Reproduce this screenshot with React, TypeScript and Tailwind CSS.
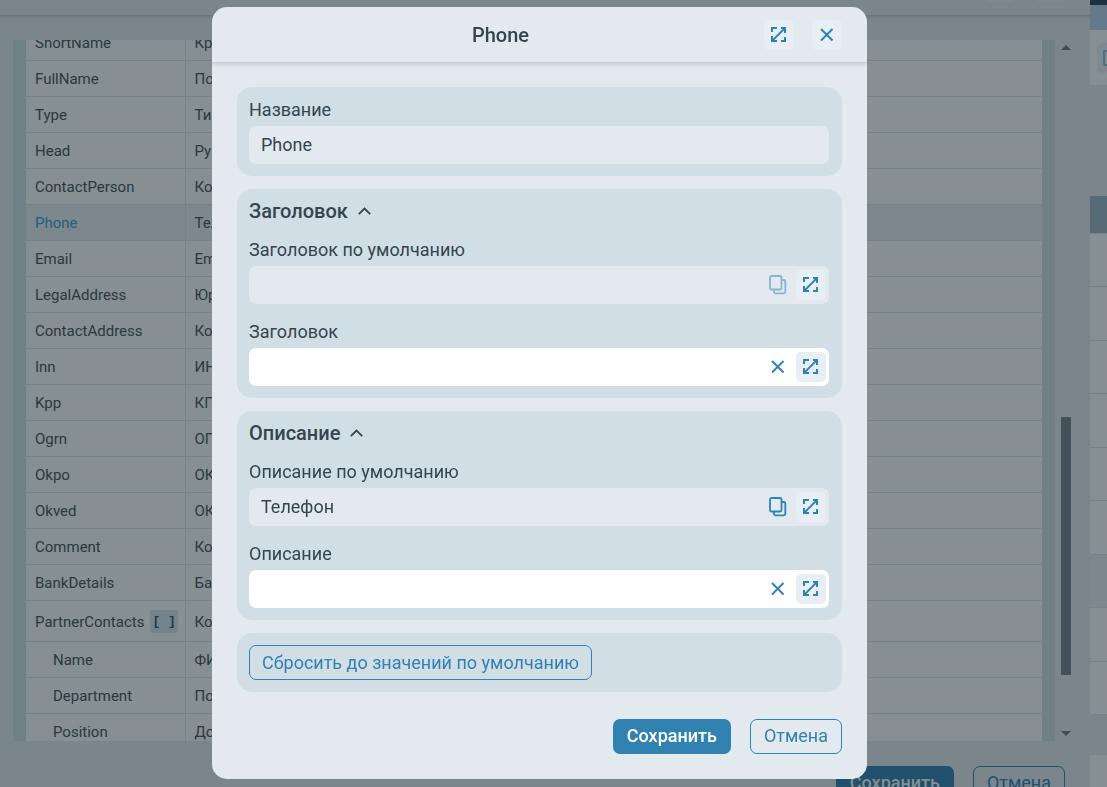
import { useState } from 'react';

type Row = { name: string; title: string; nested?: boolean; list?: boolean };

const ROWS: Row[] = [
  { name: 'ShortName', title: 'Крат.' },
  { name: 'FullName', title: 'Полн.' },
  { name: 'Type', title: 'Тип' },
  { name: 'Head', title: 'Рук.' },
  { name: 'ContactPerson', title: 'Конт.' },
  { name: 'Phone', title: 'Тел.' },
  { name: 'Email', title: 'Email' },
  { name: 'LegalAddress', title: 'Юр.' },
  { name: 'ContactAddress', title: 'Конт.' },
  { name: 'Inn', title: 'ИНН' },
  { name: 'Kpp', title: 'КПП' },
  { name: 'Ogrn', title: 'ОГРН' },
  { name: 'Okpo', title: 'ОКПО' },
  { name: 'Okved', title: 'ОКВЭД' },
  { name: 'Comment', title: 'Ком.' },
  { name: 'BankDetails', title: 'Банк' },
  { name: 'PartnerContacts', title: 'Конт.', list: true },
  { name: 'Name', title: 'ФИО', nested: true },
  { name: 'Department', title: 'Подр.', nested: true },
  { name: 'Position', title: 'Долж.', nested: true },
];

const SIDE_ROWS = [0, 1, 2, 3, 4, 5, 6, 7, 8];

function ExpandIcon() {
  return (
    <svg width="16" height="16" viewBox="0 0 16 16" fill="none" stroke="currentColor" strokeWidth="2">
      <path d="M1 5V1h5M10 1h4v5M1 9v5h5M14 10v4h-4" />
      <path d="M2 13L13 2" strokeWidth="1.8" />
      <path d="M11 1h3v3zM1 11v3h3z" fill="currentColor" stroke="none" />
    </svg>
  );
}

function CloseIcon() {
  return (
    <svg width="14" height="14" viewBox="0 0 14 14" fill="none" stroke="currentColor" strokeWidth="2">
      <path d="M1 1l11.5 11.5M12.5 1L1 12.5" />
    </svg>
  );
}

function CopyIcon() {
  return (
    <svg width="18" height="20" viewBox="0 0 18 20" fill="none" stroke="currentColor" strokeWidth="1.8">
      <rect x="1" y="1" width="11.5" height="13.5" rx="1.5" />
      <path d="M12.5 5h2.3a1.5 1.5 0 0 1 1.5 1.5v10.3a1.5 1.5 0 0 1-1.5 1.5H6.5A1.5 1.5 0 0 1 5 16.800v-2.300" />
    </svg>
  );
}

function ChevronUp() {
  return (
    <svg width="13" height="8" viewBox="0 0 13 8" fill="none" stroke="currentColor" strokeWidth="1.8">
      <path d="M.8 7.2l5.700-5.700 5.700 5.700" />
    </svg>
  );
}

type IconButtonProps = { label: string; plain?: boolean; disabled?: boolean; children: React.ReactNode };

function IconButton({ label, plain, disabled, children }: IconButtonProps) {
  return (
    <button
      type="button"
      aria-label={label}
      disabled={disabled}
      className={`flex size-[30px] shrink-0 items-center justify-center rounded-[5px] text-[#3182b1] disabled:opacity-50 ${plain ? '' : 'bg-[#e7eff5]'}`}
    >
      {children}
    </button>
  );
}

type FieldProps = {
  id: string;
  label: string;
  value: string;
  readOnly?: boolean;
  onChange?: (v: string) => void;
  children?: React.ReactNode;
};

function Field({ id, label, value, readOnly, onChange, children }: FieldProps) {
  return (
    <div className="flex flex-col gap-[5px]">
      <label htmlFor={id} className="text-lg leading-[22px]">{label}</label>
      <div className={`flex h-[38px] items-center gap-[3px] rounded-[7px] pr-[3px] ${readOnly ? 'bg-[#e2eaf0]' : 'bg-white'}`}>
        <input
          id={id}
          value={value}
          readOnly={readOnly}
          onChange={(e) => onChange?.(e.target.value)}
          className="h-full min-w-0 flex-1 bg-transparent px-3 pb-0.5 text-lg outline-none"
        />
        {children}
      </div>
    </div>
  );
}

function Group({ title, children }: { title: string; children: React.ReactNode }) {
  return (
    <section className="rounded-[15px] bg-[#d1dee6] p-3 pr-[13px]">
      <h3 className="mb-[18px] text-xl leading-5 font-medium">
        <button type="button" className="flex items-center gap-2.5">
          {title}
          <ChevronUp />
        </button>
      </h3>
      <div className="flex flex-col gap-[17px]">{children}</div>
    </section>
  );
}

function PropertyTable() {
  return (
    <table className="-mt-4 w-full table-fixed border-collapse text-[15px]">
      <colgroup>
        <col className="w-[159px]" />
        <col />
      </colgroup>
      <tbody>
        {ROWS.map((row) => (
          <tr
            key={row.name}
            className={`border-b border-[#74828a] ${row.list ? 'h-[41px]' : 'h-9'} ${row.name === 'Phone' ? 'bg-[#7c888e]' : 'bg-[#868f91]'}`}
          >
            <td className={`border-r border-[#74828a] pt-0.5 ${row.nested ? 'pl-[27px]' : 'pl-[9px]'} ${row.name === 'Phone' ? 'text-[#245f80]' : ''}`}>
              <div className="flex items-center gap-1.5 leading-5">
                {row.name}
                {row.list && (
                  <span className="rounded-[3px] bg-[#74848c] px-0.5 font-mono text-[13px] leading-[23px] font-bold whitespace-pre">[ ]</span>
                )}
              </div>
            </td>
            <td className="pt-0.5 pl-[9px] leading-5">{row.title}</td>
          </tr>
        ))}
      </tbody>
    </table>
  );
}

function Background() {
  return (
    <div className="flex h-screen overflow-hidden bg-[#7b868c] text-[#2a3941]">
      <div className="flex min-w-0 flex-1 flex-col">
        <header className="flex h-[15px] shrink-0 justify-end gap-[21px] pr-[27px] shadow-[0_1px_3px_1px_#6b757c]">
          <span className="h-0.5 w-7 rounded-b bg-[#7e898f]" />
          <span className="h-0.5 w-7 rounded-b bg-[#7e898f]" />
        </header>
        <div className="mt-[25px] flex min-h-0 flex-1 pl-[13px] pr-[19px]">
          <div className="min-w-0 flex-1 overflow-hidden bg-[#6f8087] px-[13px]">
            <PropertyTable />
          </div>
          <div className="ml-1.5 flex w-2.5 flex-col pt-[5px] pb-[5px]">
            <svg width="10" height="5" viewBox="0 0 10 5" fill="#404d55"><path d="M0 5l5-5 5 5z" /></svg>
            <div className="flex flex-1 flex-col py-1">
              <div className="grow-[363]" />
              <div className="grow-[258] bg-[#435059]" />
              <div className="grow-[52]" />
            </div>
            <svg width="10" height="5" viewBox="0 0 10 5" fill="#404d55"><path d="M0 0l5 5 5-5z" /></svg>
          </div>
        </div>
        <footer className="flex h-[46px] shrink-0 justify-end gap-[19px] pt-[25px] pr-[25px] text-lg">
          <button type="button" className="h-[35px] rounded-[7px] bg-[#20506c] px-3.5 pb-0.5 font-medium text-[#868f91]">Сохранить</button>
          <button type="button" className="h-[35px] rounded-[7px] border border-[#20506c] px-[13px] pb-0.5 text-[#20506c]">Отмена</button>
        </footer>
      </div>

      <aside className="flex w-[17px] shrink-0 flex-col overflow-hidden">
        <div className="h-[5px] shrink-0 bg-[#1e3044]" />
        <div className="h-[25px] shrink-0 bg-[#65798a]" />
        <div className="flex h-[55px] shrink-0 items-center bg-[#868f91] pl-[7px]">
          <div className="flex size-[30px] shrink-0 items-center rounded-[5px] bg-[#7f8992] pl-1.5">
            <div className="h-4 w-4 shrink-0 rounded-xs border-2 border-[#4e7080]" />
          </div>
        </div>
        <div className="h-[111px] shrink-0" />
        <div className="h-[38px] shrink-0 border-b border-[#74828a] bg-[#566b76]" />
        <div className="flex h-[481px] shrink-0 flex-col">
          {SIDE_ROWS.map((i) => (
            <div key={i} className={`flex-1 border-b border-[#74828a] ${i === 6 ? 'bg-[#7c888e]' : 'bg-[#868f91]'}`} />
          ))}
        </div>
        <div className="h-10 shrink-0" />
        <div className="flex-1 bg-[#868f91]" />
      </aside>
    </div>
  );
}

export default function App() {
  const [title, setTitle] = useState('');
  const [description, setDescription] = useState('');

  return (
    <div className="font-[Roboto,sans-serif]">
      <Background />

      <div className="fixed inset-0 flex items-start justify-center pt-[7px] pr-7">
        <div role="dialog" aria-labelledby="dialog-title" className="w-full max-w-[655px] overflow-hidden rounded-[15px] bg-[#e2eaf0] text-[#35454e]">
          <header className="flex h-[55px] items-center px-[25px] shadow-[0_1px_4px_1px_#bcc6d0]">
            <h2 id="dialog-title" className="flex-1 text-center text-xl font-medium">Phone</h2>
            <div className="flex gap-[18px]">
              <IconButton label="Развернуть"><ExpandIcon /></IconButton>
              <IconButton label="Закрыть"><CloseIcon /></IconButton>
            </div>
          </header>

          <form className="p-[25px]" onSubmit={(e) => e.preventDefault()}>
            <div className="flex flex-col gap-[13px]">
              <section className="rounded-[15px] bg-[#d1dee6] p-3 pr-[13px]">
                <Field id="name" label="Название" value="Phone" readOnly />
              </section>

              <Group title="Заголовок">
                <Field id="title-default" label="Заголовок по умолчанию" value="" readOnly>
                  <IconButton label="Копировать" plain disabled><CopyIcon /></IconButton>
                  <IconButton label="Развернуть"><ExpandIcon /></IconButton>
                </Field>
                <Field id="title" label="Заголовок" value={title} onChange={setTitle}>
                  <IconButton label="Очистить" plain><CloseIcon /></IconButton>
                  <IconButton label="Развернуть"><ExpandIcon /></IconButton>
                </Field>
              </Group>

              <Group title="Описание">
                <Field id="description-default" label="Описание по умолчанию" value="Телефон" readOnly>
                  <IconButton label="Копировать" plain><CopyIcon /></IconButton>
                  <IconButton label="Развернуть"><ExpandIcon /></IconButton>
                </Field>
                <Field id="description" label="Описание" value={description} onChange={setDescription}>
                  <IconButton label="Очистить" plain><CloseIcon /></IconButton>
                  <IconButton label="Развернуть"><ExpandIcon /></IconButton>
                </Field>
              </Group>

              <section className="flex rounded-[15px] bg-[#d1dee6] p-3">
                <button type="reset" className="h-[35px] rounded-[7px] border border-[#3182b1] px-3 text-lg text-[#3182b1]">
                  Сбросить до значений по умолчанию
                </button>
              </section>
            </div>

            <div className="mt-[27px] flex justify-end gap-[19px] text-lg">
              <button type="submit" className="h-[35px] rounded-[7px] bg-[#3182b1] px-3.5 pb-0.5 font-medium text-white">Сохранить</button>
              <button type="button" className="h-[35px] rounded-[7px] border border-[#3182b1] px-[13px] pb-0.5 text-[#3182b1]">Отмена</button>
            </div>
          </form>
        </div>
      </div>
    </div>
  );
}
